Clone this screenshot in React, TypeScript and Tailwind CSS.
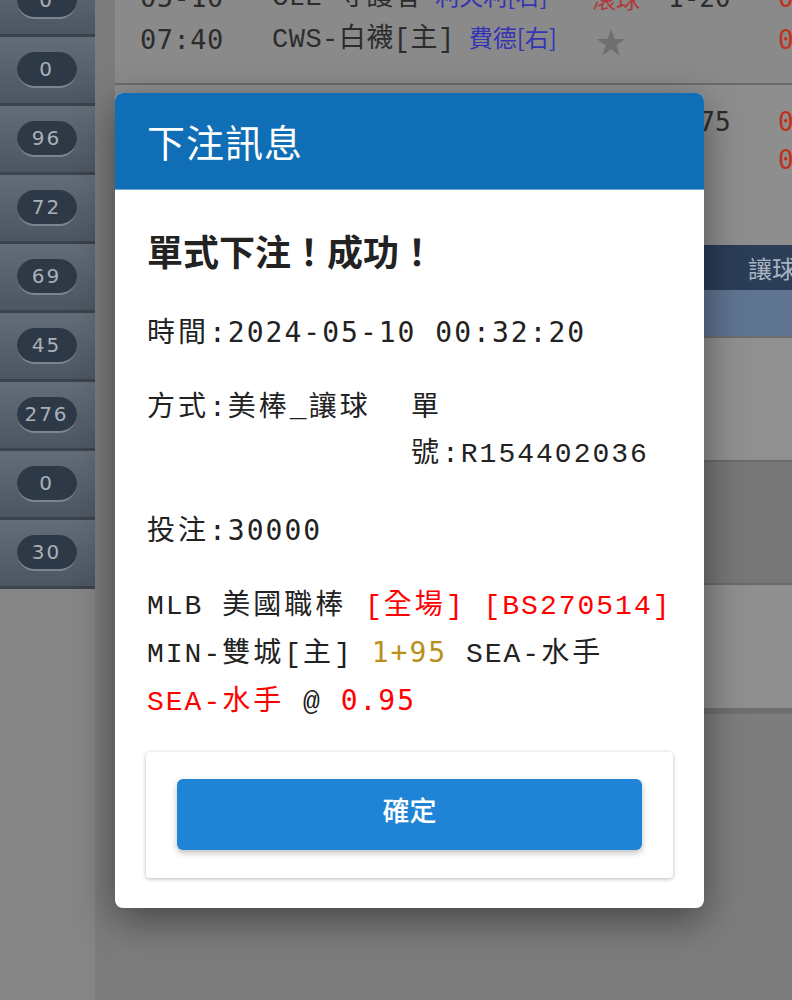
import React from "react";

const CJK = "'Noto Sans CJK TC','Noto Sans',sans-serif";
const MONO = "'Liberation Mono','Noto Sans CJK TC',monospace";
const SANSMONO = "'DejaVu Sans Mono','Noto Sans CJK TC',monospace";

const counts = ["0", "0", "96", "72", "69", "45", "276", "0", "30"];

// CJK runs sit a touch wider than the mono text around them
function C({ children }: { children: React.ReactNode }) {
  return <span className="tracking-[3px]">{children}</span>;
}

function SideRow({ n }: { n: string }) {
  return (
    <div className="h-[69px] flex items-center justify-center bg-gradient-to-b from-[#636d79] to-[#4c5662] border-b-[3px] border-[#3b434d] pr-[2px]">
      <div
        className="w-[60px] h-[36px] rounded-full bg-[#2e3947] border-b-2 border-[#7b8591] flex items-center justify-center text-[20px] tracking-[2px] text-[#aab0b8]"
        style={{ fontFamily: "'DejaVu Sans',sans-serif" }}
      >
        {n}
      </div>
    </div>
  );
}

function GameLine(props: { time: string; team: string; pitcher: string; kind?: React.ReactNode; hc?: string; odds: string; h?: string }) {
  return (
    <div className={"flex items-center " + (props.h || "h-[42px]")}>
      <div className="w-[157px] shrink-0 pl-[25px] text-[27px] tracking-[0.5px] text-[#2c2c2c]" style={{ fontFamily: SANSMONO }}>{props.time}</div>
      <div className="w-[320px] shrink-0 flex items-baseline gap-[14px] whitespace-nowrap">
        <span className="text-[27px] tracking-[0.5px] text-[#2c2c2c]" style={{ fontFamily: MONO }}>{props.team}</span>
        <span className="text-[24px] text-[#3434b4]" style={{ fontFamily: CJK }}>{props.pitcher}</span>
      </div>
      <div className="w-[76px] shrink-0 text-[24px] whitespace-nowrap" style={{ fontFamily: CJK }}>{props.kind}</div>
      <div className="w-[110px] shrink-0 text-[26px] text-[#2c2c2c]" style={{ fontFamily: SANSMONO }}>{props.hc}</div>
      <div className="text-[26px] text-[#c0301c]" style={{ fontFamily: SANSMONO }}>{props.odds}</div>
    </div>
  );
}

export default function App() {
  return (
    <div className="relative w-[792px] h-[1000px] overflow-hidden bg-[#858585] flex">
      {/* dimmed page behind */}
      <div className="w-[95px] shrink-0 -mt-[32px] self-start">
        {counts.map((n, i) => (
          <SideRow key={i} n={n} />
        ))}
      </div>

      <div className="flex-1 bg-[#7c7c7c] pl-[20px] -mt-[23px] flex flex-col">
        <div className="bg-[#8a8a8a] border-b-2 border-[#6b6b6b] pb-[22px]">
          <GameLine time="05-10" team="CLE-守護者" pitcher="利夫利[右]" kind={<span className="text-[#b03a3a]">滾球</span>} hc="1-20" odds="0" />
          <GameLine time="07:40" team="CWS-白襪[主]" pitcher="費德[右]" kind={<span className="text-[#6f6f6f] text-[30px] pl-[4px]">★</span>} odds="0" />
        </div>
        <div className="h-[160px] bg-[#8e8e8e] pt-[18px]">
          <GameLine h="h-[38px]" time="" team="" pitcher="" hc="1+75" odds="0" />
          <GameLine h="h-[38px]" time="" team="" pitcher="" odds="0" />
        </div>
        <div className="h-[45px] bg-[#2b3d57] flex items-center pl-[633px] text-[24px] text-[#a9b3c2] whitespace-nowrap" style={{ fontFamily: CJK }}>
          讓球
        </div>
        <div className="h-[48px] bg-[#5f7491] border-b-2 border-[#6d6d6d]" />
        <div className="h-[124px] bg-[#909090] border-b-2 border-[#6b6b6b]" />
        <div className="h-[123px] bg-[#777777] border-b-2 border-[#6a6a6a]" />
        <div className="h-[129px] bg-[#8f8f8f] border-b-[6px] border-[#6f6f6f]" />
        <div className="flex-1 bg-[#7d7d7d]" />
      </div>

      {/* modal */}
      <div className="absolute left-[115px] top-[93px] w-[589px] bg-white rounded-[8px] shadow-[0_12px_40px_rgba(0,0,0,0.45)] overflow-hidden">
        <div className="h-[97px] bg-[#106eb6] border-b border-[#6ea9dc] flex items-center pl-[32px] pb-[1px]">
          <span className="text-[38px] text-white tracking-[1px]" style={{ fontFamily: CJK }}>下注訊息</span>
        </div>
        <div className="px-[32px] pt-[37px] pb-[30px] text-[#222]">
          <div className="h-[46px] leading-[46px] text-[36px] font-bold" style={{ fontFamily: CJK }}>
            單式下注！成功！
          </div>
          <div className="mt-[37px] text-[28px] leading-[46px] tracking-[2px]" style={{ fontFamily: SANSMONO }}>
            <C>時間</C>:2024-05-10 00:32:20
          </div>
          <div className="mt-[30px] flex text-[28px] leading-[46px] tracking-[2px]" style={{ fontFamily: MONO }}>
            <span className="w-[264px] shrink-0">
              <C>方式</C>:<C>美棒</C>_<C>讓球</C>
            </span>
            <span className="flex-1 min-w-0">
              <C>單號</C>:R154402036
            </span>
          </div>
          <div className="mt-[30px] text-[28px] leading-[46px] tracking-[2px]" style={{ fontFamily: SANSMONO }}>
            <C>投注</C>:30000
          </div>
          <div className="mt-[30px] text-[28px] leading-[46px] tracking-[2px]" style={{ fontFamily: MONO }}>
            MLB <C>美國職棒</C> <span className="text-[#ff0000]">[<C>全場</C>]</span> <span className="text-[#ff0000]">[BS270514]</span>
            <br />
            MIN-<C>雙城</C>[<C>主</C>] <span className="text-[#b8901a]" style={{ fontFamily: SANSMONO }}>1+95</span> SEA-<C>水手</C>
            <br />
            <span className="text-[#ff0000]">SEA-<C>水手</C></span> @ <span className="text-[#ff0000]" style={{ fontFamily: SANSMONO }}>0.95</span>
          </div>
          <div className="mt-[26px] -mx-[1px] rounded-[4px] bg-white shadow-[0_1px_4px_rgba(0,0,0,0.28)] pt-[27px] pb-[28px] px-[31px]">
            <button
              className="w-full h-[71px] pb-[8px] rounded-[6px] bg-[#1f84d5] text-white text-[27px] font-medium shadow-[0_3px_6px_rgba(0,0,0,0.25)]"
              style={{ fontFamily: CJK }}
            >
              確定
            </button>
          </div>
        </div>
      </div>
    </div>
  );
}
